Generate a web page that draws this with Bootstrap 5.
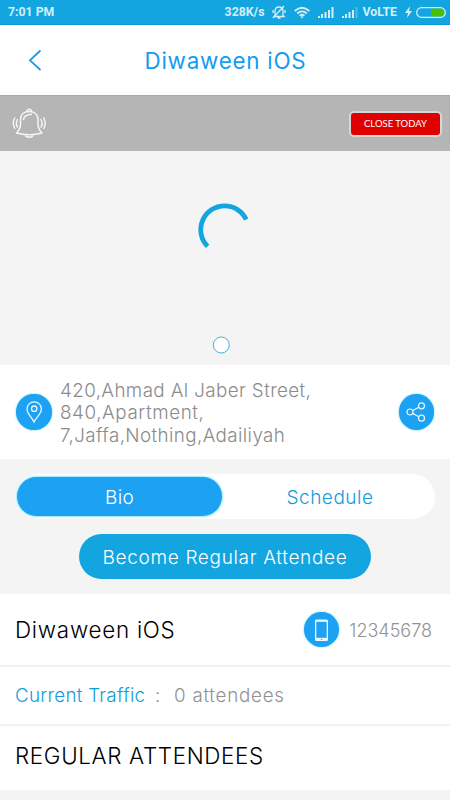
<!DOCTYPE html>
<html lang="en">
<head>
<meta charset="utf-8">
<meta name="viewport" content="width=device-width, initial-scale=1">
<title>Diwaween iOS</title>
<link href="https://cdn.jsdelivr.net/npm/bootstrap@5.3.0/dist/css/bootstrap.min.css" rel="stylesheet">
<style>
body{background:#f4f4f4;font-family:Inter,"Open Sans",sans-serif;font-weight:300;width:450px;height:800px;overflow:hidden}
svg{display:block;flex:none}
span,h1,h2,button{white-space:nowrap}
.status{height:25px;background:#12a5df;border-bottom:1px solid #0b97d5;color:#d5effa;font:700 12.3px/24px Roboto,sans-serif}
.topbar{height:70px;color:#129cf3}
.topbar h1{font-size:22.4px;line-height:26px;font-weight:400;letter-spacing:.75px;padding-top:1px}
.notice{height:56px;background:#b5b5b5;border-top:1px solid #a9a9a9}
.closed{width:93px;height:26px;background:#e00000;border:2px solid #d6d6d6;border-radius:5px;color:#fff;font:400 9.5px/22px Lato,sans-serif}
.gallery{height:214px;padding-top:52px}
.address{height:94px;color:#8b8b8b;font-size:18.8px;line-height:22.5px;padding-top:1px}
.address span{display:block}
.lines{padding:2px 0 0 8.5px}
.a1,.a3{letter-spacing:.4px}
.a2{letter-spacing:.6px}
.disc{width:35.5px;height:35.5px;background:#1da1f2;box-shadow:0 0 2px #4fd0ff;flex:none}
.address .disc{margin-bottom:1px}
.tabs-area{height:135px;padding-top:15px}
.switch{width:420px;height:45px;margin-left:15px;padding:3px 2px}
.switch .btn{width:205px;height:39px;font-size:19px;font-weight:300;padding:4px 0 0;color:#129cdc;border:0;flex:none}
.switch .btn.on{background:#1da1f2;color:#fff;box-shadow:0 0 2px 1px #8fe6ff;letter-spacing:.3px}
.switch .btn.off{width:211px;letter-spacing:.5px;padding-left:5px}
.join{width:292px;height:45px;margin:15px 0 0 79px;background:#12a5df;color:#fff;font-size:19px;font-weight:300;letter-spacing:.66px;padding:4px 0 0}
.line-row{border-bottom:2px solid #f2f2f2;padding-left:15px}
.r1{height:73px;padding-right:18px}.r2{height:59px;font-size:18.8px;padding-top:2px}.r3{height:64px;padding:0 0 4px 15px}
.r1 h2,.r3 h2{font-size:22.4px;font-weight:300;color:#000}
.r1 h2{letter-spacing:.75px;padding-top:2px}
.r3 h2{letter-spacing:.65px}
.num{font-size:18px;margin-left:10px;padding-top:1px}
.grey{color:#929292}.blue{color:#129cdc}
.c1{letter-spacing:.28px;width:140px}
.c2{width:19px}
.c3{letter-spacing:.75px}
</style>
</head>
<body>
<div class="status d-flex align-items-center ps-2">
<span>7:01 PM</span>
<span class="ms-auto">328K/s</span>
<svg class="ms-2" width="14" height="15" viewBox="0 0 14 15" fill="none" stroke="#d5effa" stroke-width="1.3"><path d="M3 10.500V6q0-4 4-4t4 4v4.500l1 1H2zM5.500 13h3M12 1 1 13M1 5v3M13 5v3"/></svg>
<svg class="ms-2" width="16" height="13" viewBox="0 0 16 13" fill="none" stroke="#d5effa" stroke-width="1.800"><path d="M.7 5q7.300-6.500 14.600 0M3.200 7.500q4.800-4.200 9.600 0M5.600 9.800q2.400-2 4.800 0"/><circle cx="8" cy="11.300" r="1" fill="#d5effa" stroke="none"/></svg>
<svg class="ms-2" width="16" height="11" viewBox="0 0 16 11" fill="#d5effa"><path d="M0 9h2v2H0zM3 7h2v4H3zM6.500 5h2v6h-2zM10 3h2v8h-2zM13.500 0h2v11h-2z"/></svg>
<svg class="ms-2" width="16" height="11" viewBox="0 0 16 11" fill="#d5effa"><path d="M0 9h2v2H0zM3 7h2v4H3zM6.500 5h2v6h-2zM10 3h2v8h-2z"/><path opacity=".3" d="M13.500 0h2v11h-2z"/></svg>
<span class="ms-1">VoLTE</span>
<svg class="ms-2" width="7" height="12" viewBox="0 0 7 12" fill="#d5effa"><path d="M5 0 0 7h3l-1 5 5-7H4z"/></svg>
<svg class="ms-1" width="34" height="11" viewBox="0 0 34 11"><path d="M15 1.500h9.500a4 4 0 0 1 0 8H15z" fill="#49c000"/><rect x=".7" y=".7" width="28.600" height="9.600" rx="4.800" fill="none" stroke="#d5effa" stroke-width="1.300"/></svg>
</div>
<header class="topbar bg-white d-flex align-items-center">
<svg width="144.500" height="70" viewBox="0 0 144.500 70" fill="none" stroke="#129cf3" stroke-width="1.800"><path d="M40.500 25.500 30 35.300 40.500 45"/></svg>
<h1 class="mb-0">Diwaween iOS</h1>
</header>
<div class="notice d-flex align-items-center justify-content-between">
<svg class="ms-2" width="42" height="40" viewBox="8 104 42 40" fill="none" stroke="#f5f5f5" stroke-width="1.500" stroke-linecap="round" stroke-linejoin="round"><path d="M27 111.500a2.200 2.200 0 1 1 4.400 0M16.500 133c3-3 4-5.500 4-9v-4.500c0-5 3.500-8 8.700-8s8.800 3 8.800 8v4.500c0 3.500 1 6 4 9q-12.700 3.500-25.500 0zM25 134.500c1 3.500 7.500 3.500 8.500 0M23.500 119.500q.5-4.500 8-5.200M17.500 119.500q-2.200 4 0 7.500M14.800 118q-3 5.200 0 10.500M41 119.500q2.200 4 0 7.500M43.700 118q3 5.200 0 10.500"/></svg>
<div class="closed text-center me-2">CLOSE TODAY</div>
</div>
<div class="gallery">
<svg width="450" height="152" viewBox="0 203 450 152" fill="none"><path d="M207.600 246.400A23.800 23.800 0 0 1 224.600 205.900A23.800 23.800 0 0 1 246.200 219.600" stroke="#12a5df" stroke-width="4.800"/><circle cx="221.300" cy="345" r="8" fill="#fff" stroke="#3eb3df" stroke-width="1"/></svg>
</div>
<section class="address bg-white d-flex align-items-center">
<div class="disc rounded-circle ms-3"><svg width="36" height="36" viewBox="0 0 36 36" fill="none" stroke="#e8f7ff" stroke-width="1.300"><path d="M18 28c-2-4.500-7-8-7-13a7.200 7.200 0 0 1 14.400 0C25.400 20 20 23.500 18 28z"/><circle cx="18.200" cy="14.700" r="2.700"/></svg></div>
<div class="lines"><span class="a1">420,Ahmad Al Jaber Street,</span><span class="a2">840,Apartment,</span><span class="a3">7,Jaffa,Nothing,Adailiyah</span></div>
<div class="disc rounded-circle ms-auto me-3"><svg width="36" height="36" viewBox="0 0 36 36" fill="none" stroke="#e8f7ff" stroke-width="1.200"><circle cx="11" cy="18" r="3"/><circle cx="22.500" cy="11.800" r="3"/><circle cx="22.500" cy="24.200" r="3"/><path d="m13.700 16.600 6.100-3.300M13.700 19.400l6.100 3.300"/></svg></div>
</section>
<div class="tabs-area">
<div class="switch d-flex bg-white rounded-pill"><button class="btn on rounded-pill">Bio</button><button class="btn off rounded-pill">Schedule</button></div>
<button class="join btn rounded-pill d-block border-0">Become Regular Attendee</button>
</div>
<section class="bg-white">
<div class="line-row r1 d-flex align-items-center"><h2 class="mb-0">Diwaween iOS</h2>
<div class="disc rounded-circle ms-auto"><svg width="36" height="36" viewBox="0 0 36 36"><rect x="11" y="7.500" width="13" height="21.500" rx="1.500" fill="#eefaff"/><path d="M12.300 9.800h10.400v16H12.300z" fill="#1da1f2"/><circle cx="17.500" cy="27.400" r=".7" fill="#1da1f2"/></svg></div>
<span class="grey num">12345678</span></div>
<div class="line-row r2 d-flex align-items-center"><span class="blue c1">Current Traffic</span><span class="grey c2">:</span><span class="grey c3">0 attendees</span></div>
<div class="r3 d-flex align-items-center"><h2 class="mb-0">REGULAR ATTENDEES</h2></div>
</section>
<script src="https://cdn.jsdelivr.net/npm/bootstrap@5.3.0/dist/js/bootstrap.bundle.min.js"></script>
</body>
</html>
